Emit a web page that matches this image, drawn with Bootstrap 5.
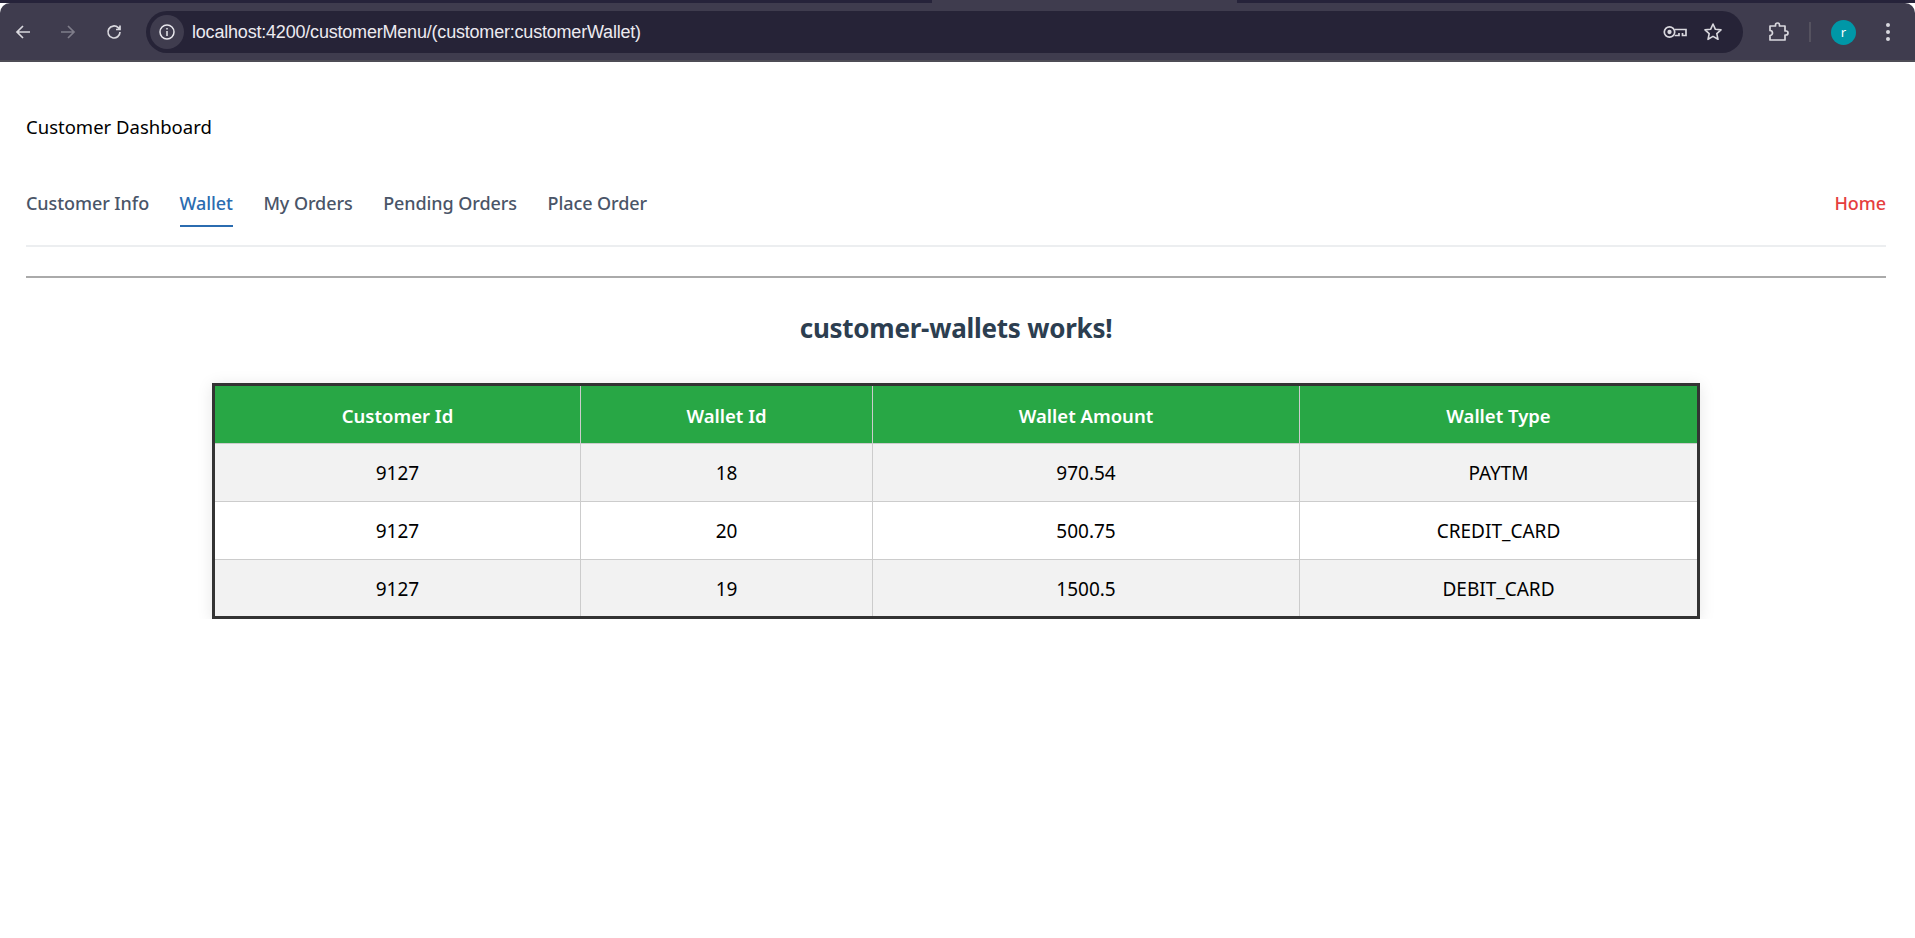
<!DOCTYPE html>
<html lang="en">
<head>
<meta charset="UTF-8">
<meta name="viewport" content="width=device-width, initial-scale=1.0">
<link href="https://cdn.jsdelivr.net/npm/bootstrap@5.3.3/dist/css/bootstrap.min.css" rel="stylesheet">
<title>Customer Dashboard</title>
<style>
body { font-family: "Noto Sans", "Open Sans", sans-serif; background: #fff; overflow: hidden; }
.tab-strip { height: 3px; background: #26233a; }
.tab-active { width: 305px; height: 3px; margin-left: 932px; background: #3f3c4e; }
.tool-bar { height: 59px; background: #3f3c4e; padding-top: 8px; border-radius: 10px 10px 0 0; border-bottom: 2px solid #4d4c55; }
.tool-btn { width: 45.500px; height: 42px; color: #d9d8de; }
.tool-btn svg { display: block; }
.back-btns { width: 146px; }
.url-bar { height: 42px; flex: 1; background: #262337; border-radius: 21px; padding: 0 20px 0 4px; color: #e8e7ec; }
.url-info { width: 34px; height: 34px; border-radius: 50%; background: #3f3c4e; margin-right: 8px; }
.url-text { font-family: "Liberation Sans", sans-serif; font-size: 18px; letter-spacing: -.2px; color: #eceaf0; }
.tool-right { width: 172px; height: 42px; padding-left: 24px; }
.tool-sep { width: 2px; height: 20px; background: #55525f; margin: 0 20px; }
.avatar { width: 25px; height: 25px; border-radius: 50%; background: #0097a7; color: #fff; font-size: 13px; line-height: 24px; text-align: center; }
.tool-dots { margin-left: 29px; }
.page-wrap { padding: 0 29px 0 26px; }
.dash-title { font-size: 18.500px; color: #000; margin: 0; padding-top: 51px; line-height: 28px; }
.menu-bar { margin-top: 42px; height: 64px; border-bottom: 2px solid #eceef0; padding-top: 6px; }
.menu-bar .nav-link { padding: 0; margin-right: 30.500px; height: 40px; line-height: 29px; font-size: 18px; font-weight: 500; color: #4a5568; letter-spacing: -.08px; }
.menu-bar .nav-link.active { color: #2b6cb0; border-bottom: 2px solid #2b6cb0; height: 38px; }
.menu-bar .home-link { margin-right: 0; color: #e53e3e; }
.page-rule { margin: 29px 0 0; border: 0; border-top: 2px solid #aaa; opacity: 1; }
.wallet-title { font-size: 26px; font-weight: 700; color: #2c3e50; text-align: center; margin: 31px 0 0; line-height: 38px; letter-spacing: -.25px; }
.wallet-box { width: 1488px; margin: 36px 0 0 186px; box-shadow: 0 2px 15px rgba(0,0,0,.1); }
.wallet-table { margin: 0; table-layout: fixed; border: 3px solid #333; text-align: center; font-size: 19px; color: #000; }
.wallet-table th, .wallet-table td { height: 58px; padding: 2px 0 0; vertical-align: middle; border: 1px solid #ccc; box-shadow: none; background: transparent; color: inherit; }
.wallet-table thead th { height: 59px; background: #28a745; color: #fff; font-size: 18.500px; font-weight: 600; letter-spacing: 0; }
.wallet-table tbody tr:nth-child(odd) td { background: #f2f2f2; }
.wallet-table tbody tr:nth-child(even) td { background: #fff; }
.col-one { width: 367px; }
.col-two { width: 292px; }
.col-three { width: 427px; }
</style>
</head>
<body>
<div class="tab-strip"><div class="tab-active"></div></div>
<div class="tool-bar d-flex align-items-start">
    <div class="back-btns d-flex align-items-center">
        <div class="tool-btn d-flex align-items-center justify-content-center">
            <svg width="18" height="18" viewBox="0 0 18 18" fill="none" stroke="currentColor" stroke-width="1.700"><path d="M16 9H3M9 3L3 9l6 6"/></svg>
        </div>
        <div class="tool-btn d-flex align-items-center justify-content-center">
            <svg width="18" height="18" viewBox="0 0 18 18" fill="none" stroke="#7f7d8a" stroke-width="1.700"><path d="M2 9h13M9 3l6 6-6 6"/></svg>
        </div>
        <div class="tool-btn d-flex align-items-center justify-content-center">
            <svg width="18" height="18" viewBox="0 0 18 18" fill="none" stroke="currentColor" stroke-width="1.700"><path d="M15 9a6 6 0 1 1-1.800-4.300L15 6.500M15 2.500v4h-4"/></svg>
        </div>
    </div>
    <div class="url-bar d-flex align-items-center">
        <div class="url-info d-flex align-items-center justify-content-center">
            <svg width="18" height="18" viewBox="0 0 18 18" fill="none" stroke="#e8e7ec" stroke-width="1.500"><circle cx="9" cy="9" r="7"/><path d="M9 8v5M9 5v1.500"/></svg>
        </div>
        <span class="url-text flex-grow-1">localhost:4200/customerMenu/(customer:customerWallet)</span>
        <svg class="me-3" width="24" height="14" viewBox="0 0 24 14" fill="none" stroke="#d9d8de" stroke-width="1.700"><circle cx="6.500" cy="7" r="5.200"/><circle cx="6.500" cy="7" r="1.300" fill="#d9d8de"/><path d="M11.700 4.500H23v6h-3.500V8M16 8v2.500h-4.400"/></svg>
        <svg width="20" height="20" viewBox="0 0 20 20" fill="none" stroke="#d9d8de" stroke-width="1.600" stroke-linejoin="round"><path d="M10 2l2.400 5.300 5.600.6-4.200 3.800 1.200 5.600L10 14.400l-5 2.900 1.200-5.600L2 7.900l5.600-.6z"/></svg>
    </div>
    <div class="tool-right d-flex align-items-center">
        <svg width="22" height="22" viewBox="0 0 22 22" fill="none" stroke="#d9d8de" stroke-width="1.700" stroke-linejoin="round"><path d="M3 5h5.500V4a2 2 0 0 1 4 0v1H18v5h1a2 2 0 0 1 0 4h-1v5H3v-4.500a2.500 2.500 0 0 0 0-5z"/></svg>
        <div class="tool-sep"></div>
        <div class="avatar">r</div>
        <svg class="tool-dots" width="6" height="20" viewBox="0 0 6 20" fill="#d9d8de"><circle cx="3" cy="3" r="2"/><circle cx="3" cy="10" r="2"/><circle cx="3" cy="17" r="2"/></svg>
    </div>
</div>
<div class="page-wrap">
    <p class="dash-title">Customer Dashboard</p>
    <nav class="menu-bar nav">
        <a class="nav-link" href="#">Customer Info</a>
        <a class="nav-link active" href="#">Wallet</a>
        <a class="nav-link" href="#">My Orders</a>
        <a class="nav-link" href="#">Pending Orders</a>
        <a class="nav-link" href="#">Place Order</a>
        <a class="nav-link home-link ms-auto" href="#">Home</a>
    </nav>
    <hr class="page-rule">
    <h2 class="wallet-title">customer-wallets works!</h2>
    <div class="wallet-box">
        <table class="table wallet-table">
            <colgroup><col class="col-one"><col class="col-two"><col class="col-three"><col></colgroup>
            <thead>
                <tr><th>Customer Id</th><th>Wallet Id</th><th>Wallet Amount</th><th>Wallet Type</th></tr>
            </thead>
            <tbody>
                <tr><td>9127</td><td>18</td><td>970.54</td><td>PAYTM</td></tr>
                <tr><td>9127</td><td>20</td><td>500.75</td><td>CREDIT_CARD</td></tr>
                <tr><td>9127</td><td>19</td><td>1500.5</td><td>DEBIT_CARD</td></tr>
            </tbody>
        </table>
    </div>
</div>
</body>
</html>
